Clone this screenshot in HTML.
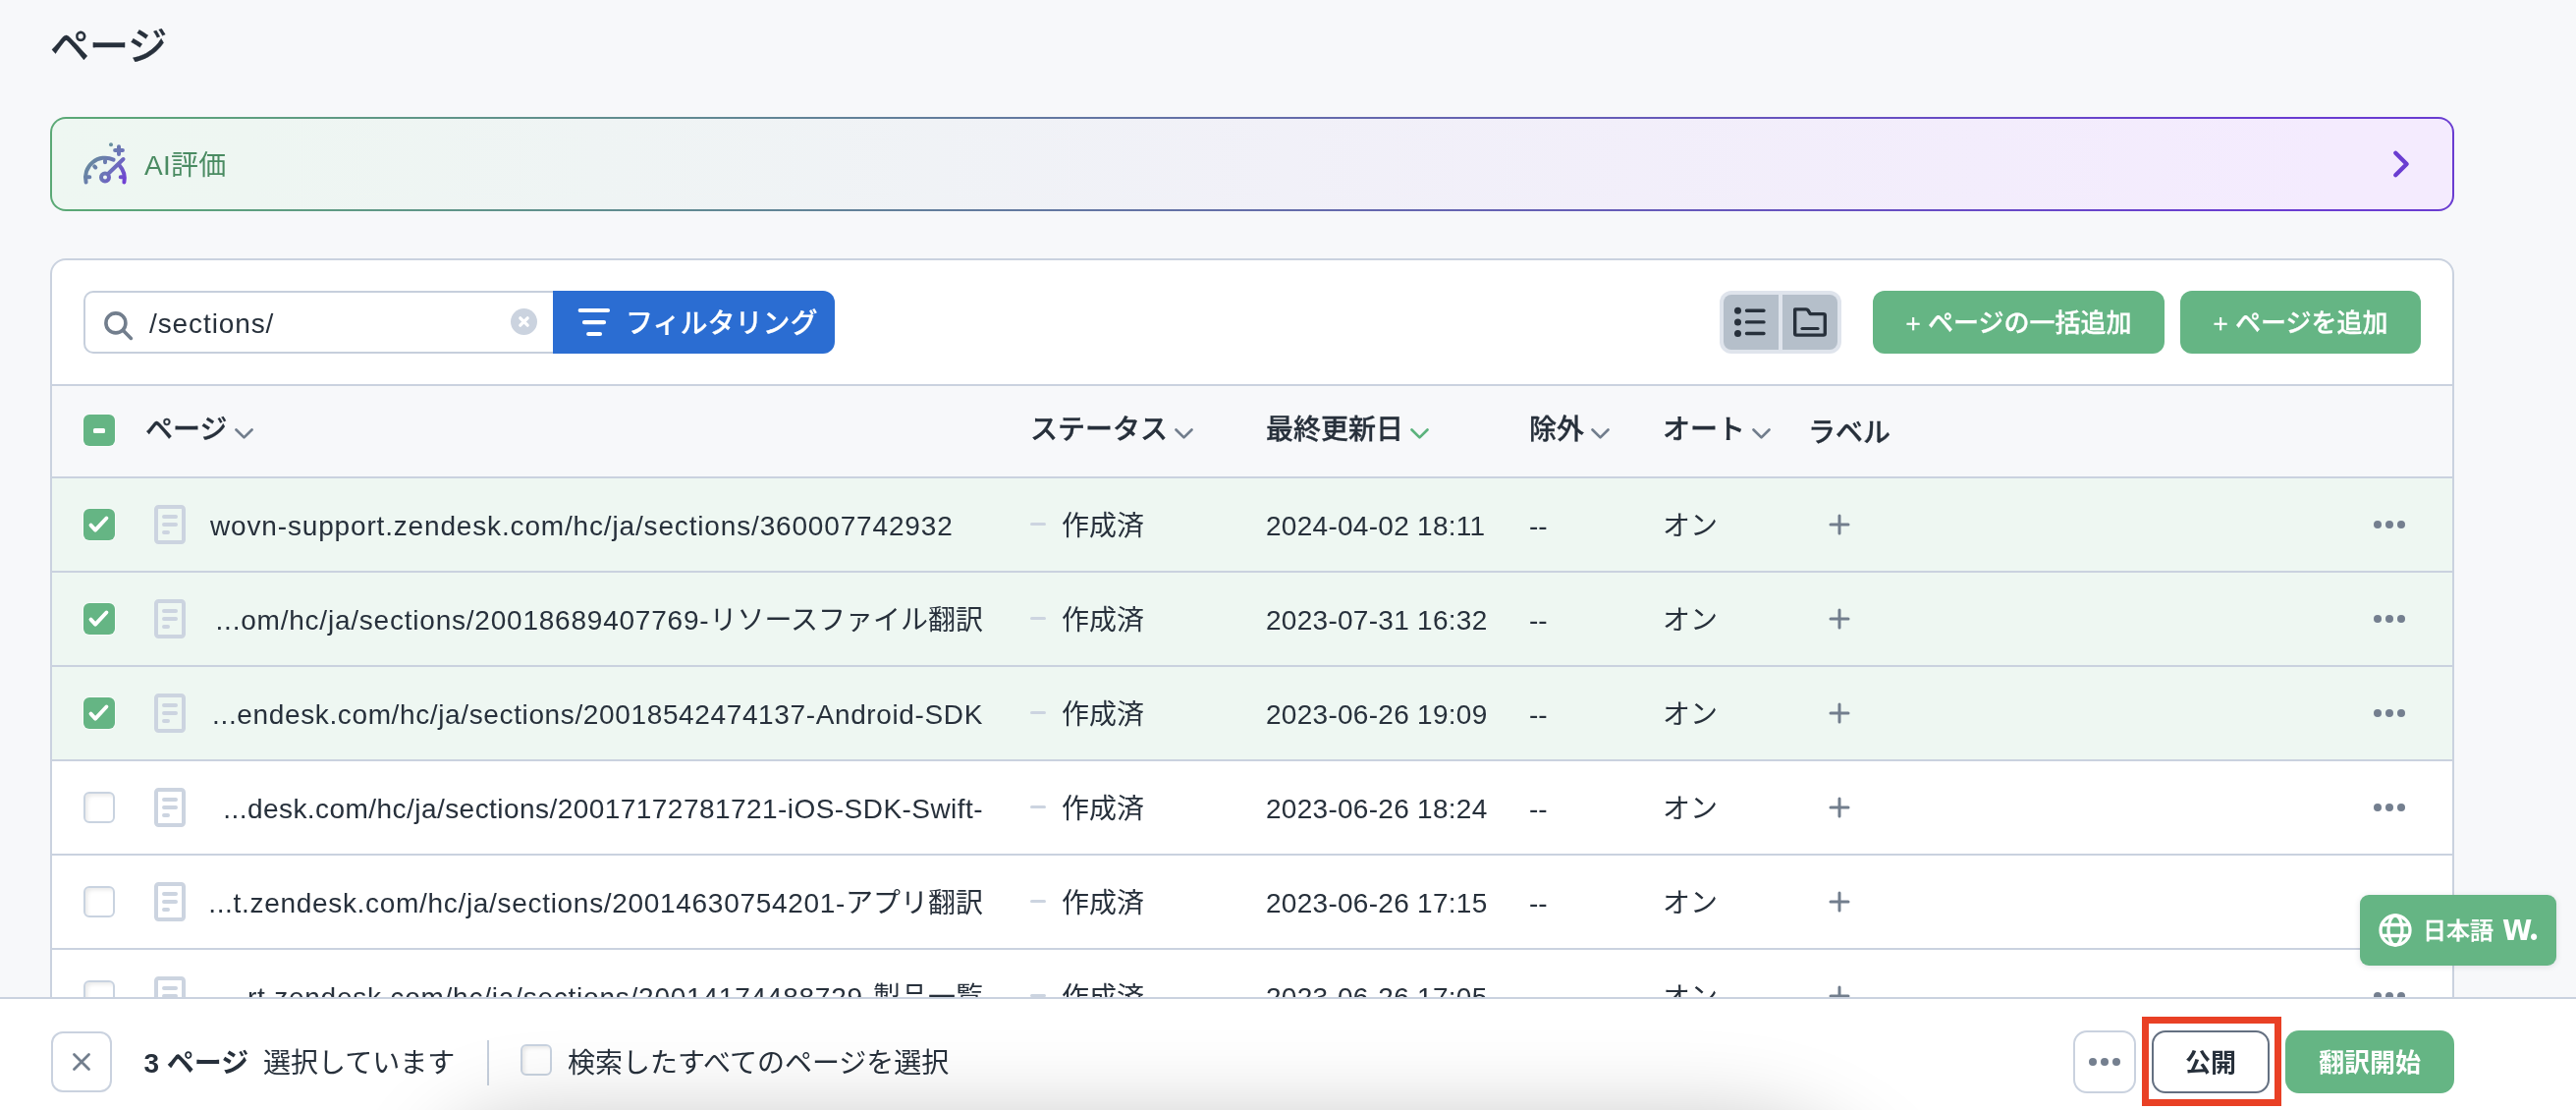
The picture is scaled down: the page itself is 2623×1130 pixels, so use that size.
<!DOCTYPE html>
<html lang="ja">
<head>
<meta charset="utf-8">
<title>ページ</title>
<style>
*{box-sizing:border-box;margin:0;padding:0}
html,body{width:2623px;height:1130px;overflow:hidden}
body{background:#f7f8fa;font-family:"Liberation Sans","Noto Sans CJK JP",sans-serif;color:#27303b;font-size:28px;position:relative}
.abs{position:absolute}
.page{left:0;top:0;width:2623px;height:1130px;overflow:hidden;will-change:transform}
svg{position:absolute;overflow:visible}
.title{left:51px;top:17px;font-size:40px;font-weight:500;-webkit-text-stroke:.25px #27303b;line-height:60px;white-space:nowrap}
.banner{left:51px;top:119px;width:2448px;height:96px;border-radius:16px;background:linear-gradient(90deg,#5aa975 0%,#5f9a84 12%,#6a3dd1 92%)}
.banner .in{position:absolute;left:2px;top:2px;right:2px;bottom:2px;border-radius:14px;background:linear-gradient(90deg,#eef7f2 0%,#eef6f2 8%,#f4ebfe 95%)}
.banner .txt{position:absolute;left:96px;top:2px;letter-spacing:.3px;line-height:96px;font-size:28px;color:#4a8b62;white-space:nowrap}
.card{left:51px;top:263px;width:2448px;height:900px;border:2px solid #cad2df;border-radius:16px;background:#fff;overflow:hidden}
.search{position:absolute;left:32px;top:31px;width:480px;height:64px;border:2px solid #c6cfdc;border-right:none;border-radius:10px 0 0 10px;background:#fff}
.search .q{position:absolute;left:65px;top:2px;line-height:60px;font-size:28px;letter-spacing:.9px;white-space:nowrap}
.filter{position:absolute;left:510px;top:31px;width:287px;height:64px;background:#2b6dd2;border-radius:0 12px 12px 0;color:#fff;font-weight:500}
.filter .t{-webkit-text-stroke:.2px #fff;position:absolute;left:74px;top:3px;line-height:62px;font-size:28px;white-space:nowrap}
.toggle{position:absolute;left:1698px;top:31px;width:124px;height:64px;border-radius:12px;background:#dfe4ec}
.toggle .b{position:absolute;top:4px;height:56px;background:#b5bfca}
.toggle .b1{left:4px;width:56px;border-radius:8px 0 0 8px}
.toggle .b2{left:64px;width:56px;border-radius:0 8px 8px 0}
.gbtn{position:absolute;top:31px;height:64px;border-radius:12px;background:#65b584;color:#fff;font-weight:500;-webkit-text-stroke:.3px #fff;font-size:26px;line-height:66px;text-align:center;white-space:nowrap}
.hrow{position:absolute;left:0;top:126px;width:100%;height:94px;background:#f7f8fa;border-top:2px solid #cad2df;font-weight:500}
.hrow .h{position:absolute;top:0;line-height:90px;white-space:nowrap;-webkit-text-stroke:.3px #27303b}
.row{position:absolute;left:0;width:100%;height:96px;border-top:2px solid #cad2df;background:#fff}
.row.sel{background:#eef7f2}
.row .c{position:absolute;top:2px;line-height:94px;white-space:nowrap}
.cb{position:absolute;left:32px;width:32px;height:32px;border-radius:6px}
.cb.on{background:#65b584;box-shadow:0 0 0 1px rgba(255,255,255,.55)}
.cb.off{background:#fff;border:2px solid #c9d3e0;box-shadow:inset 3px 3px 4px -1px rgba(0,0,0,.09)}
.bar{left:0;top:1015px;width:2623px;height:115px;background:#fff;border-top:2px solid #cad2df}
.bar .t{position:absolute;top:2px;line-height:128px;white-space:nowrap}
.sq{position:absolute;border:2px solid #cad2df;background:#fff}
.lang{left:2403px;top:911px;width:200px;height:72px;border-radius:9px;background:#65b584;box-shadow:0 1px 6px rgba(40,50,70,.13);color:#fff}
</style>
</head>
<body>
<div class="abs page">
<div class="abs title">ページ</div>

<div class="abs banner"><div class="in"></div>
<svg style="left:32px;top:24px" width="48" height="48" viewBox="0 0 48 48">
 <defs><linearGradient id="ag" gradientUnits="userSpaceOnUse" x1="4" y1="14" x2="46" y2="44"><stop offset="0" stop-color="#668f97"/><stop offset=".55" stop-color="#6c74b8"/><stop offset="1" stop-color="#7038d8"/></linearGradient></defs>
 <g fill="none" stroke="url(#ag)" stroke-width="4" stroke-linecap="round">
  <path d="M4.6 42.5 A20 20 0 0 1 32.6 19.6"/>
  <path d="M38.6 25.4 A20 20 0 0 1 43.4 42.5"/>
  <path d="M27.5 33.5 L42.5 19"/>
  <circle cx="24" cy="37.5" r="4"/>
  <path d="M5.5 37.2 H8.3 M13.2 26.4 L14.3 27.5 M24 20.5 V22.2 M39.7 37.2 H42.5"/>
  <path d="M38 6.2 V14 M34.1 10.1 H41.9"/>
 </g>
 <circle cx="30" cy="4.2" r="2" fill="#688fa0"/>
</svg>
<div class="txt">AI評価</div>
<svg style="left:2384px;top:32px" width="20" height="32" viewBox="0 0 20 32"><path d="M4.3 4.8 L15.6 16 L4.3 27.2" fill="none" stroke="#6a3dd1" stroke-width="4.4" stroke-linecap="round" stroke-linejoin="round"/></svg>
</div>

<div class="abs card">
 <div class="search">
  <svg style="left:17px;top:17px" width="34" height="34" viewBox="0 0 34 34"><circle cx="13.9" cy="13.9" r="10" fill="none" stroke="#727e8d" stroke-width="3.6"/><path d="M21.5 21.5 L29.4 29.4" stroke="#727e8d" stroke-width="3.6" stroke-linecap="round"/></svg>
  <div class="q">/sections/</div>
  <svg style="left:432.5px;top:16px" width="27" height="27" viewBox="0 0 27 27"><circle cx="13.5" cy="13.5" r="13.5" fill="#cbd3df"/><path d="M9.8 9.8 L17.2 17.2 M17.2 9.8 L9.8 17.2" stroke="#fff" stroke-width="3.2" stroke-linecap="round"/></svg>
 </div>
 <div class="filter">
  <svg style="left:24px;top:18px" width="36" height="32" viewBox="0 0 36 32"><path d="M3.7 2H32M8 14.2H28M12.2 26H24" stroke="#fff" stroke-width="4.2" stroke-linecap="round"/></svg>
  <div class="t">フィルタリング</div>
 </div>
 <div class="toggle"><div class="b b1"></div><div class="b b2"></div>
  <svg style="left:14px;top:16px" width="36" height="32" viewBox="0 0 36 32"><g fill="#27303b"><circle cx="4.5" cy="4.3" r="3.5"/><circle cx="4.5" cy="15.9" r="3.5"/><circle cx="4.5" cy="27.5" r="3.5"/></g><path d="M13.5 4.3H31M13.5 15.9H31M13.5 27.5H31" stroke="#27303b" stroke-width="3.4" stroke-linecap="round"/></svg>
  <svg style="left:73px;top:15px" width="38" height="34" viewBox="0 0 38 34"><path d="M3.7 3.9 H15 Q16.4 3.9 17.1 5 L19.3 8.6 H32.6 Q34.3 8.6 34.3 10.2 V28.5 Q34.3 30.1 32.6 30.1 H5.4 Q3.7 30.1 3.7 28.5 Z" fill="none" stroke="#27303b" stroke-width="3.4" stroke-linejoin="round"/><path d="M11 23.5H27" stroke="#27303b" stroke-width="3.2" stroke-linecap="round"/></svg>
 </div>
 <div class="gbtn" style="left:1854px;width:297px">+ ページの一括追加</div>
 <div class="gbtn" style="left:2167px;width:245px">+ ページを追加</div>
 <div class="hrow"><div class="cb on" style="top:29px;left:32px"><div class="abs" style="left:10px;top:13.5px;width:12px;height:5px;border-radius:1.5px;background:#fff"></div></div><div class="h" style="left:95px">ページ</div><svg style="left:185.5px;top:43px" width="19" height="11" viewBox="0 0 19 11"><path d="M1.5 1.5 L9.5 9.4 L17.5 1.5" fill="none" stroke="#727e8d" stroke-width="2.7" stroke-linecap="round" stroke-linejoin="round"/></svg><div class="h" style="left:996px">ステータス</div><svg style="left:1143px;top:43px" width="19" height="11" viewBox="0 0 19 11"><path d="M1.5 1.5 L9.5 9.4 L17.5 1.5" fill="none" stroke="#727e8d" stroke-width="2.7" stroke-linecap="round" stroke-linejoin="round"/></svg><div class="h" style="left:1236px">最終更新日</div><svg style="left:1383px;top:43px" width="19" height="11" viewBox="0 0 19 11"><path d="M1.5 1.5 L9.5 9.4 L17.5 1.5" fill="none" stroke="#5cb37d" stroke-width="2.7" stroke-linecap="round" stroke-linejoin="round"/></svg><div class="h" style="left:1504px">除外</div><svg style="left:1567px;top:43px" width="19" height="11" viewBox="0 0 19 11"><path d="M1.5 1.5 L9.5 9.4 L17.5 1.5" fill="none" stroke="#727e8d" stroke-width="2.7" stroke-linecap="round" stroke-linejoin="round"/></svg><div class="h" style="left:1640px">オート</div><svg style="left:1731px;top:43px" width="19" height="11" viewBox="0 0 19 11"><path d="M1.5 1.5 L9.5 9.4 L17.5 1.5" fill="none" stroke="#727e8d" stroke-width="2.7" stroke-linecap="round" stroke-linejoin="round"/></svg><div class="h" style="left:1788px;top:3px">ラベル</div></div>
 <div class="row sel" style="top:220px"><div class="cb on" style="top:31px;left:32px"><svg style="left:0;top:0" width="32" height="32" viewBox="0 0 32 32"><path d="M7.5 16.6 L12.1 21.6 L23.4 9.5" fill="none" stroke="#fff" stroke-width="3.9" stroke-linecap="round" stroke-linejoin="round"/></svg></div><svg style="left:104px;top:27px" width="32" height="40" viewBox="0 0 32 40"><rect x="2" y="2" width="28" height="36" rx="2.5" fill="none" stroke="#ccd4e0" stroke-width="4"/><path d="M10 12H22M10 20H22M10 28H14" stroke="#ccd4e0" stroke-width="4" stroke-linecap="round"/></svg><div class="c" style="left:161px"><span style="letter-spacing:0.84px">wovn-support.zendesk.com/hc/ja/sections/360007742932</span></div><div class="abs" style="left:996px;top:45px;width:16px;height:3px;border-radius:2px;background:#ccd4e0"></div><div class="c" style="left:1028px">作成済</div><div class="c" style="left:1236px;letter-spacing:.28px">2024-04-02 18:11</div><div class="c" style="left:1504px">--</div><div class="c" style="left:1640px">オン</div><svg style="left:1809px;top:36px" width="22" height="22" viewBox="0 0 22 22"><path d="M11 2V20M2 11H20" stroke="#727e8d" stroke-width="3" stroke-linecap="round"/></svg><svg style="left:2364px;top:43px" width="32" height="8" viewBox="0 0 32 8"><circle cx="4" cy="4" r="4" fill="#747f8f"/><circle cx="16" cy="4" r="4" fill="#747f8f"/><circle cx="28" cy="4" r="4" fill="#747f8f"/></svg></div><div class="row sel" style="top:316px"><div class="cb on" style="top:31px;left:32px"><svg style="left:0;top:0" width="32" height="32" viewBox="0 0 32 32"><path d="M7.5 16.6 L12.1 21.6 L23.4 9.5" fill="none" stroke="#fff" stroke-width="3.9" stroke-linecap="round" stroke-linejoin="round"/></svg></div><svg style="left:104px;top:27px" width="32" height="40" viewBox="0 0 32 40"><rect x="2" y="2" width="28" height="36" rx="2.5" fill="none" stroke="#ccd4e0" stroke-width="4"/><path d="M10 12H22M10 20H22M10 28H14" stroke="#ccd4e0" stroke-width="4" stroke-linecap="round"/></svg><div class="c" style="right:1496px;text-align:right"><span style="letter-spacing:0.78px">...om/hc/ja/sections/20018689407769-</span>リソースファイル翻訳</div><div class="abs" style="left:996px;top:45px;width:16px;height:3px;border-radius:2px;background:#ccd4e0"></div><div class="c" style="left:1028px">作成済</div><div class="c" style="left:1236px;letter-spacing:.28px">2023-07-31 16:32</div><div class="c" style="left:1504px">--</div><div class="c" style="left:1640px">オン</div><svg style="left:1809px;top:36px" width="22" height="22" viewBox="0 0 22 22"><path d="M11 2V20M2 11H20" stroke="#727e8d" stroke-width="3" stroke-linecap="round"/></svg><svg style="left:2364px;top:43px" width="32" height="8" viewBox="0 0 32 8"><circle cx="4" cy="4" r="4" fill="#747f8f"/><circle cx="16" cy="4" r="4" fill="#747f8f"/><circle cx="28" cy="4" r="4" fill="#747f8f"/></svg></div><div class="row sel" style="top:412px"><div class="cb on" style="top:31px;left:32px"><svg style="left:0;top:0" width="32" height="32" viewBox="0 0 32 32"><path d="M7.5 16.6 L12.1 21.6 L23.4 9.5" fill="none" stroke="#fff" stroke-width="3.9" stroke-linecap="round" stroke-linejoin="round"/></svg></div><svg style="left:104px;top:27px" width="32" height="40" viewBox="0 0 32 40"><rect x="2" y="2" width="28" height="36" rx="2.5" fill="none" stroke="#ccd4e0" stroke-width="4"/><path d="M10 12H22M10 20H22M10 28H14" stroke="#ccd4e0" stroke-width="4" stroke-linecap="round"/></svg><div class="c" style="right:1496px;text-align:right"><span style="letter-spacing:0.63px">...endesk.com/hc/ja/sections/20018542474137-Android-SDK</span></div><div class="abs" style="left:996px;top:45px;width:16px;height:3px;border-radius:2px;background:#ccd4e0"></div><div class="c" style="left:1028px">作成済</div><div class="c" style="left:1236px;letter-spacing:.28px">2023-06-26 19:09</div><div class="c" style="left:1504px">--</div><div class="c" style="left:1640px">オン</div><svg style="left:1809px;top:36px" width="22" height="22" viewBox="0 0 22 22"><path d="M11 2V20M2 11H20" stroke="#727e8d" stroke-width="3" stroke-linecap="round"/></svg><svg style="left:2364px;top:43px" width="32" height="8" viewBox="0 0 32 8"><circle cx="4" cy="4" r="4" fill="#747f8f"/><circle cx="16" cy="4" r="4" fill="#747f8f"/><circle cx="28" cy="4" r="4" fill="#747f8f"/></svg></div><div class="row" style="top:508px"><div class="cb off" style="top:31px;left:32px"></div><svg style="left:104px;top:27px" width="32" height="40" viewBox="0 0 32 40"><rect x="2" y="2" width="28" height="36" rx="2.5" fill="none" stroke="#ccd4e0" stroke-width="4"/><path d="M10 12H22M10 20H22M10 28H14" stroke="#ccd4e0" stroke-width="4" stroke-linecap="round"/></svg><div class="c" style="right:1496px;text-align:right"><span style="letter-spacing:0.45px">...desk.com/hc/ja/sections/20017172781721-iOS-SDK-Swift-</span></div><div class="abs" style="left:996px;top:45px;width:16px;height:3px;border-radius:2px;background:#ccd4e0"></div><div class="c" style="left:1028px">作成済</div><div class="c" style="left:1236px;letter-spacing:.28px">2023-06-26 18:24</div><div class="c" style="left:1504px">--</div><div class="c" style="left:1640px">オン</div><svg style="left:1809px;top:36px" width="22" height="22" viewBox="0 0 22 22"><path d="M11 2V20M2 11H20" stroke="#727e8d" stroke-width="3" stroke-linecap="round"/></svg><svg style="left:2364px;top:43px" width="32" height="8" viewBox="0 0 32 8"><circle cx="4" cy="4" r="4" fill="#747f8f"/><circle cx="16" cy="4" r="4" fill="#747f8f"/><circle cx="28" cy="4" r="4" fill="#747f8f"/></svg></div><div class="row" style="top:604px"><div class="cb off" style="top:31px;left:32px"></div><svg style="left:104px;top:27px" width="32" height="40" viewBox="0 0 32 40"><rect x="2" y="2" width="28" height="36" rx="2.5" fill="none" stroke="#ccd4e0" stroke-width="4"/><path d="M10 12H22M10 20H22M10 28H14" stroke="#ccd4e0" stroke-width="4" stroke-linecap="round"/></svg><div class="c" style="right:1496px;text-align:right"><span style="letter-spacing:0.69px">...t.zendesk.com/hc/ja/sections/20014630754201-</span>アプリ翻訳</div><div class="abs" style="left:996px;top:45px;width:16px;height:3px;border-radius:2px;background:#ccd4e0"></div><div class="c" style="left:1028px">作成済</div><div class="c" style="left:1236px;letter-spacing:.28px">2023-06-26 17:15</div><div class="c" style="left:1504px">--</div><div class="c" style="left:1640px">オン</div><svg style="left:1809px;top:36px" width="22" height="22" viewBox="0 0 22 22"><path d="M11 2V20M2 11H20" stroke="#727e8d" stroke-width="3" stroke-linecap="round"/></svg><svg style="left:2364px;top:43px" width="32" height="8" viewBox="0 0 32 8"><circle cx="4" cy="4" r="4" fill="#747f8f"/><circle cx="16" cy="4" r="4" fill="#747f8f"/><circle cx="28" cy="4" r="4" fill="#747f8f"/></svg></div><div class="row" style="top:700px"><div class="cb off" style="top:31px;left:32px"></div><svg style="left:104px;top:27px" width="32" height="40" viewBox="0 0 32 40"><rect x="2" y="2" width="28" height="36" rx="2.5" fill="none" stroke="#ccd4e0" stroke-width="4"/><path d="M10 12H22M10 20H22M10 28H14" stroke="#ccd4e0" stroke-width="4" stroke-linecap="round"/></svg><div class="c" style="right:1496px;text-align:right"><span style="letter-spacing:0.77px">...rt.zendesk.com/hc/ja/sections/20014174488729-</span>製品一覧</div><div class="abs" style="left:996px;top:45px;width:16px;height:3px;border-radius:2px;background:#ccd4e0"></div><div class="c" style="left:1028px">作成済</div><div class="c" style="left:1236px;letter-spacing:.28px">2023-06-26 17:05</div><div class="c" style="left:1504px">--</div><div class="c" style="left:1640px">オン</div><svg style="left:1809px;top:36px" width="22" height="22" viewBox="0 0 22 22"><path d="M11 2V20M2 11H20" stroke="#727e8d" stroke-width="3" stroke-linecap="round"/></svg><svg style="left:2364px;top:43px" width="32" height="8" viewBox="0 0 32 8"><circle cx="4" cy="4" r="4" fill="#747f8f"/><circle cx="16" cy="4" r="4" fill="#747f8f"/><circle cx="28" cy="4" r="4" fill="#747f8f"/></svg></div>
</div>

<div class="abs lang">
 <svg style="left:19px;top:19px" width="34" height="34" viewBox="0 0 34 34"><g fill="none" stroke="#fff" stroke-width="3.3"><circle cx="17" cy="17" r="15"/><ellipse cx="17" cy="17" rx="7" ry="15"/><path d="M3.5 11.5H30.5M3.5 22.5H30.5"/></g></svg>
 <div class="abs" style="left:64px;top:2px;line-height:70px;font-size:24px;font-weight:500;-webkit-text-stroke:.3px #fff;white-space:nowrap">日本語</div>
 <div class="abs" style="left:145px;top:0;line-height:72px;font-family:'DejaVu Sans',sans-serif;font-size:27.5px;font-weight:700;white-space:nowrap">W<span style="position:absolute;left:27px;top:-3px;font-family:'Noto Sans CJK JP',sans-serif;font-weight:900;font-size:29px;line-height:72px">.</span></div>
</div>

<div class="abs bar">
 <div class="sq" style="left:52px;top:33px;width:62px;height:62px;border-radius:12px"><svg style="left:20px;top:20px" width="18" height="18" viewBox="0 0 18 18"><path d="M1.5 1.5L16.5 16.5M16.5 1.5L1.5 16.5" stroke="#727e8d" stroke-width="2.8" stroke-linecap="round"/></svg></div>
 <div class="t" style="left:146.5px;font-weight:700">3 ページ</div>
 <div class="t" style="left:268px">選択しています</div>
 <div class="abs" style="left:496px;top:42px;width:2px;height:46px;background:#c6cfdc"></div>
 <div class="cb off" style="left:530px;top:46px"></div>
 <div class="t" style="left:578px">検索したすべてのページを選択</div>
 <div class="sq" style="left:2111px;top:32px;width:64px;height:64px;border-radius:14px"><svg style="left:14px;top:26px" width="32" height="8" viewBox="0 0 32 8"><circle cx="4" cy="4" r="4" fill="#747f8f"/><circle cx="16" cy="4" r="4" fill="#747f8f"/><circle cx="28" cy="4" r="4" fill="#747f8f"/></svg></div>
 <div class="abs" style="left:2181px;top:18px;width:142px;height:91px;border:7px solid #e94025"></div>
 <div class="sq" style="left:2191px;top:32px;width:120px;height:64px;border-radius:14px;border-color:#647081;font-size:26px;font-weight:700;line-height:62px;text-align:center">公開</div>
 <div class="abs" style="left:2327px;top:32px;width:172px;height:64px;border-radius:14px;background:#65b584;color:#fff;font-size:26px;font-weight:700;line-height:66px;text-align:center">翻訳開始</div>
 <div class="abs" style="left:0;top:0;width:2623px;height:113px;overflow:hidden"><div class="abs" style="left:440px;top:126px;width:1510px;height:200px;border-radius:120px 240px 0 0;box-shadow:0 0 90px 0 rgba(0,0,0,.25)"></div></div>
</div>
</div>
</body>
</html>
